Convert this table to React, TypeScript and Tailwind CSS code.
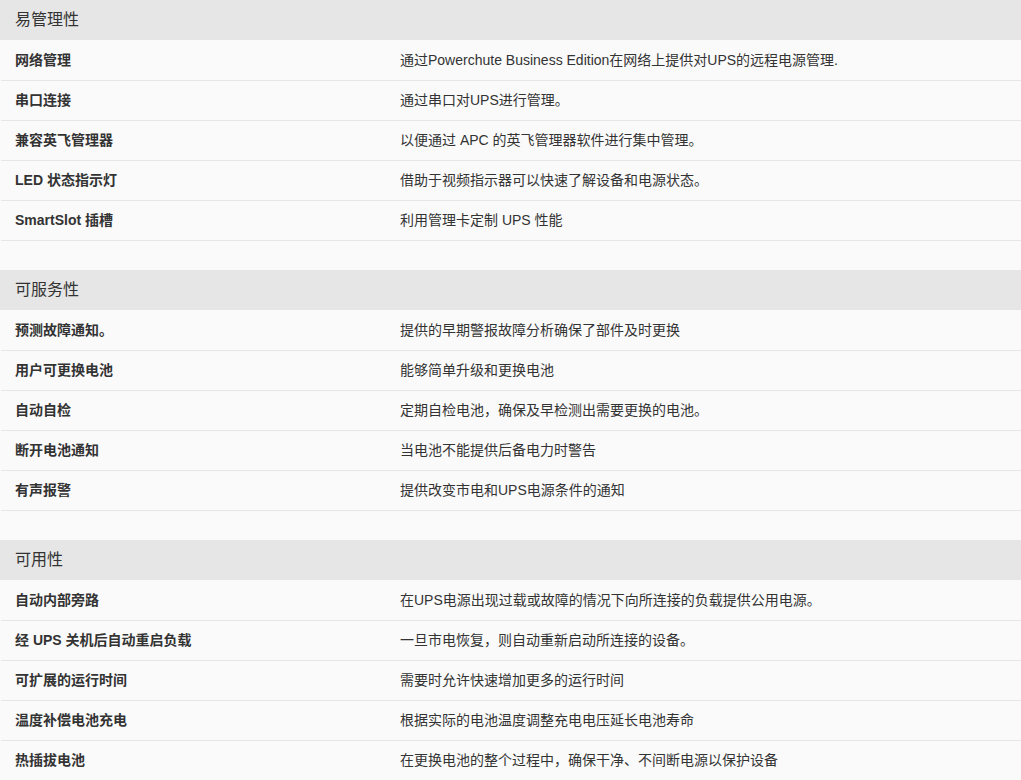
const sections: { title: string; rows: [string, string][] }[] = [
  {
    title: "易管理性",
    rows: [
      ["网络管理", "通过Powerchute Business Edition在网络上提供对UPS的远程电源管理."],
      ["串口连接", "通过串口对UPS进行管理。"],
      ["兼容英飞管理器", "以便通过 APC 的英飞管理器软件进行集中管理。"],
      ["LED 状态指示灯", "借助于视频指示器可以快速了解设备和电源状态。"],
      ["SmartSlot 插槽", "利用管理卡定制 UPS 性能"],
    ],
  },
  {
    title: "可服务性",
    rows: [
      ["预测故障通知。", "提供的早期警报故障分析确保了部件及时更换"],
      ["用户可更换电池", "能够简单升级和更换电池"],
      ["自动自检", "定期自检电池，确保及早检测出需要更换的电池。"],
      ["断开电池通知", "当电池不能提供后备电力时警告"],
      ["有声报警", "提供改变市电和UPS电源条件的通知"],
    ],
  },
  {
    title: "可用性",
    rows: [
      ["自动内部旁路", "在UPS电源出现过载或故障的情况下向所连接的负载提供公用电源。"],
      ["经 UPS 关机后自动重启负载", "一旦市电恢复，则自动重新启动所连接的设备。"],
      ["可扩展的运行时间", "需要时允许快速增加更多的运行时间"],
      ["温度补偿电池充电", "根据实际的电池温度调整充电电压延长电池寿命"],
      ["热插拔电池", "在更换电池的整个过程中，确保干净、不间断电源以保护设备"],
    ],
  },
];

export default function App() {
  return (
    <div
      className="min-h-screen bg-[#fafafa] text-[#333]"
      style={{ fontFamily: '"Liberation Sans", "Noto Sans CJK SC", sans-serif' }}
    >
      {sections.map((s) => (
        <div key={s.title} className="pb-[29px]">
          <div className="flex h-[40px] items-center bg-[#e6e6e6] pl-[15px] text-[16px]">{s.title}</div>
          <div className="pt-px">
            {s.rows.map(([k, v]) => (
              <div key={k} className="ml-px flex h-[40px] items-center border-b border-[#e6e6e6] text-[14px]">
                <div className="w-[399px] pl-[14px] font-bold">{k}</div>
                <div>{v}</div>
              </div>
            ))}
          </div>
        </div>
      ))}
    </div>
  );
}
